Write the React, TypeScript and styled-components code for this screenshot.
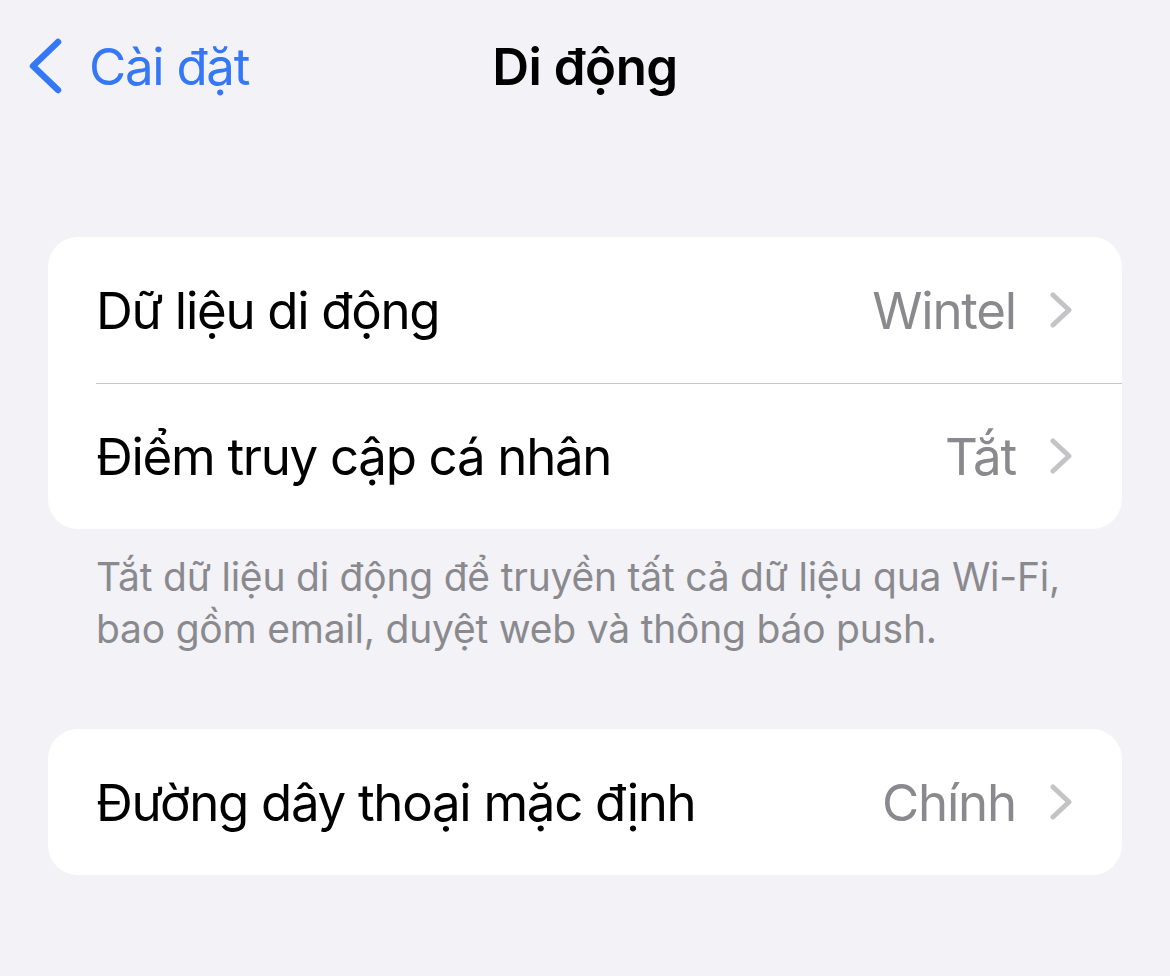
import React from "react";
import styled, { createGlobalStyle } from "styled-components";

const GlobalStyle = createGlobalStyle`
  html, body {
    margin: 0;
    padding: 0;
    background: #f2f2f7;
  }
  body {
    font-family: Inter, "Liberation Sans", "Noto Sans", sans-serif;
    -webkit-font-smoothing: antialiased;
  }
`;

const Screen = styled.div`
  width: 1170px;
  min-height: 976px;
  background: #f2f2f7;
  display: flex;
  flex-direction: column;
`;

const NavBar = styled.header`
  height: 132px;
  display: grid;
  grid-template-columns: 1fr auto 1fr;
  align-items: center;
  padding: 0 28px;
  box-sizing: border-box;
`;

const BackButton = styled.button`
  justify-self: start;
  display: flex;
  align-items: center;
  gap: 27px;
  border: none;
  background: none;
  padding: 0;
  color: #3478f6;
  font-family: inherit;
  font-size: 51px;
  font-weight: 400;
  letter-spacing: -1.3px;
  cursor: pointer;
`;

const Title = styled.h1`
  margin: 0;
  font-size: 51px;
  font-weight: 600;
  color: #000;
  letter-spacing: -0.5px;
`;

const Content = styled.main`
  display: flex;
  flex-direction: column;
  padding: 105px 48px 0;
`;

const Card = styled.section`
  background: #fff;
  border-radius: 30px;
  overflow: hidden;
`;

const Row = styled.div<{ $divided?: boolean }>`
  position: relative;
  height: 146px;
  display: flex;
  align-items: center;
  padding: 0 49px 0 48px;
  &::before {
    content: "";
    display: ${(p) => (p.$divided ? "block" : "none")};
    position: absolute;
    top: 0;
    left: 48px;
    right: 0;
    height: 1px;
    background: #c8c8cc;
  }
`;

const Label = styled.span`
  flex: 1;
  font-size: 51px;
  color: #000;
  letter-spacing: -1.3px;
  white-space: nowrap;
`;

const Value = styled.span`
  font-size: 51px;
  color: #8a8a8e;
  letter-spacing: -1.2px;
  margin-right: 33px;
`;

const Footer = styled.p`
  margin: 0;
  padding: 22px 48px 0;
  font-size: 39px;
  line-height: 52px;
  color: #8a8a8e;
  letter-spacing: -0.22px;
  white-space: nowrap;
`;

const Spacer = styled.div<{ $h: number }>`
  height: ${(p) => p.$h}px;
`;

const BackChevron = () => (
  <svg width="34" height="56" viewBox="0 0 34 56" fill="none">
    <path
      d="M30 4 L5 28 L30 52"
      stroke="#3478f6"
      strokeWidth="6.5"
      strokeLinecap="round"
      strokeLinejoin="round"
    />
  </svg>
);

const Disclosure = () => (
  <svg width="24" height="36" viewBox="0 0 24 36" fill="none">
    <path
      d="M4 3 L20 18 L4 33"
      stroke="#c4c4c7"
      strokeWidth="5"
      strokeLinecap="round"
      strokeLinejoin="round"
    />
  </svg>
);

type Item = { label: string; value: string };

const SettingRow = ({ item, divided }: { item: Item; divided?: boolean }) => (
  <Row $divided={divided}>
    <Label>{item.label}</Label>
    <Value>{item.value}</Value>
    <Disclosure />
  </Row>
);

const dataGroup: Item[] = [
  { label: "Dữ liệu di động", value: "Wintel" },
  { label: "Điểm truy cập cá nhân", value: "Tắt" },
];

const lineGroup: Item[] = [{ label: "Đường dây thoại mặc định", value: "Chính" }];

export default function App() {
  return (
    <Screen>
      <GlobalStyle />
      <NavBar>
        <BackButton>
          <BackChevron />
          Cài đặt
        </BackButton>
        <Title>Di động</Title>
        <span />
      </NavBar>
      <Content>
        <Card>
          {dataGroup.map((item, i) => (
            <SettingRow key={item.label} item={item} divided={i > 0} />
          ))}
        </Card>
        <Footer>
          Tắt dữ liệu di động để truyền tất cả dữ liệu qua Wi-Fi,
          <br />
          bao gồm email, duyệt web và thông báo push.
        </Footer>
        <Spacer $h={74} />
        <Card>
          {lineGroup.map((item, i) => (
            <SettingRow key={item.label} item={item} divided={i > 0} />
          ))}
        </Card>
      </Content>
    </Screen>
  );
}
